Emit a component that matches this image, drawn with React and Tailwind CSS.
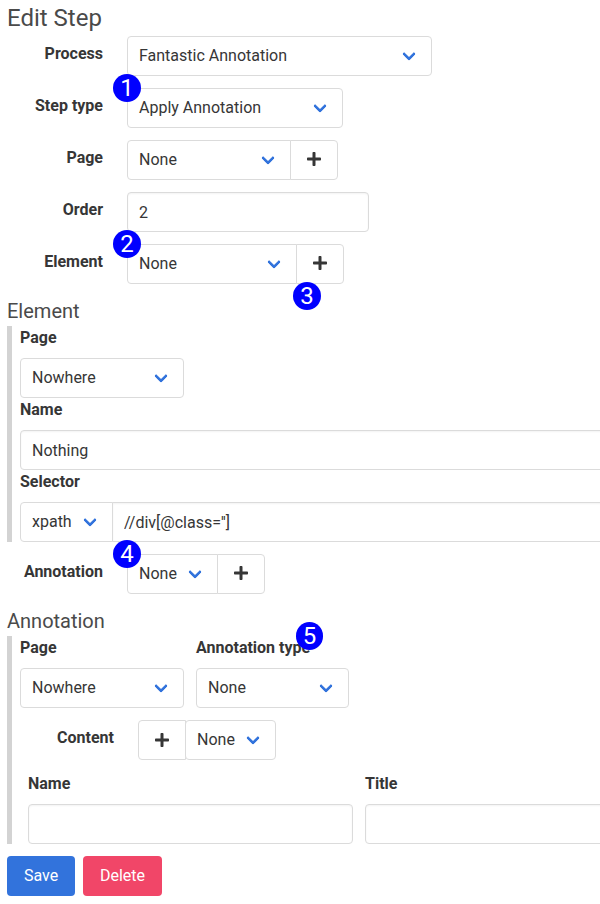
import React from 'react';

function Badge({ children, className }) {
  return (
    <span
      className={`absolute z-10 flex h-7 w-7 items-center justify-center rounded-full bg-[#0000ff] text-2xl leading-7 text-white ${className}`}
    >
      {children}
    </span>
  );
}

function Select({ value, className }) {
  return (
    <button
      type="button"
      className={`flex h-10 shrink-0 items-start justify-between rounded border border-[#dbdbdb] bg-white pl-[11px] pr-[17px] pt-[7px] leading-6 ${className}`}
    >
      <span>{value}</span>
      <span className="mt-[5px] h-2.5 w-2.5 -rotate-45 rounded-[2px] border-b-[3px] border-l-[3px] border-[#3273dc]" />
    </button>
  );
}

function PlusButton({ className }) {
  return (
    <button
      type="button"
      aria-label="Add"
      className={`flex h-10 w-12 shrink-0 items-start justify-center border border-[#dbdbdb] bg-white ${className}`}
    >
      <svg viewBox="0 0 448 512" className="h-4 w-3.5 fill-current">
        <path d="M416 208H272V64c0-17.67-14.33-32-32-32h-32c-17.67 0-32 14.33-32 32v144H32c-17.67 0-32 14.33-32 32v32c0 17.67 14.33 32 32 32h144v144c0 17.67 14.33 32 32 32h32c17.67 0 32-14.33 32-32V304h144c17.67 0 32-14.33 32-32v-32c0-17.67-14.33-32-32-32z" />
      </svg>
    </button>
  );
}

function TextInput({ value = '', label, className }) {
  return (
    <input
      aria-label={label}
      defaultValue={value}
      className={`h-10 shrink-0 rounded border border-[#dbdbdb] bg-white px-[11px] pb-[7px] pt-[8px] leading-6 shadow-[inset_0_1px_2px_rgba(10,10,10,0.05)] outline-none ${className}`}
    />
  );
}

function Row({ label, children }) {
  return (
    <div className="flex h-10 gap-6">
      <div className="w-24 shrink-0 pt-1.5 text-right font-bold leading-6">{label}</div>
      <div className="relative flex">{children}</div>
    </div>
  );
}

function Field({ label, children, badge }) {
  return (
    <div className="flex shrink-0 flex-col gap-2">
      <div className="relative font-bold leading-6">
        {label}
        {badge}
      </div>
      <div className="flex">{children}</div>
    </div>
  );
}

function Heading({ children }) {
  return <h2 className="mt-3 text-xl leading-[30px] text-[#4a4a4a]">{children}</h2>;
}

export default function App() {
  return (
    <main className="h-[904px] w-[600px] overflow-hidden bg-white pl-[7px] font-[Roboto,sans-serif] text-base text-[#363636]">
      <h1 className="text-2xl leading-9 text-[#4a4a4a]">Edit Step</h1>

      <div className="flex flex-col gap-3">
        <Row label="Process">
          <Select value="Fantastic Annotation" className="w-[305px]" />
        </Row>
        <Row label="Step type">
          <Badge className="-left-3.5 -top-3.5">1</Badge>
          <Select value="Apply Annotation" className="w-[216px]" />
        </Row>
        <Row label="Page">
          <Select value="None" className="w-[164px] rounded-r-none" />
          <PlusButton className="-ml-px rounded-r pt-2.5" />
        </Row>
        <Row label="Order">
          <TextInput label="Order" value="2" className="w-[242px]" />
        </Row>
        <Row label="Element">
          <Badge className="-left-3.5 -top-3.5">2</Badge>
          <Select value="None" className="w-[170px] rounded-r-none" />
          <PlusButton className="-ml-px rounded-r pt-2.5" />
          <Badge className="-bottom-[26px] right-[23px]">3</Badge>
        </Row>
      </div>

      <Heading>Element</Heading>
      <section className="mb-3 border-l-[5px] border-[#d3d3d3] pl-2">
        <Field label="Page">
          <Select value="Nowhere" className="w-[164px]" />
        </Field>
        <Field label="Name">
          <TextInput label="Name" value="Nothing" className="w-[600px]" />
        </Field>
        <Field label="Selector">
          <Select value="xpath" className="w-[93px] rounded-r-none" />
          <TextInput label="Selector" value="//div[@class='']" className="-ml-px w-[508px] rounded-l-none" />
        </Field>
      </section>

      <Row label="Annotation">
        <Badge className="-left-3.5 -top-3.5">4</Badge>
        <Select value="None" className="w-[91px] rounded-r-none" />
        <PlusButton className="-ml-px rounded-r pt-2.5" />
      </Row>

      <Heading>Annotation</Heading>
      <section className="mb-3 flex flex-col gap-3 border-l-[5px] border-[#d3d3d3] pl-2">
        <div className="flex gap-3">
          <Field label="Page">
            <Select value="Nowhere" className="w-[164px]" />
          </Field>
          <Field
            label="Annotation type"
            badge={<Badge className="-top-3.5 left-[100px] w-[27px] font-normal">5</Badge>}
          >
            <Select value="None" className="w-[153px]" />
          </Field>
        </div>
        <div className="flex h-10 gap-6">
          <div className="w-[94px] shrink-0 pt-1.5 text-right font-bold leading-6">Content</div>
          <div className="flex">
            <PlusButton className="rounded-l pt-[11px]" />
            <Select value="None" className="-ml-px w-[91px]" />
          </div>
        </div>
        <div className="flex gap-3 pl-2">
          <Field label="Name">
            <TextInput label="Annotation name" className="w-[325px]" />
          </Field>
          <Field label="Title">
            <TextInput label="Title" className="w-[325px]" />
          </Field>
        </div>
      </section>

      <div className="flex gap-2 text-white">
        <button type="button" className="h-10 w-[68px] rounded bg-[#3273dc] pb-px leading-6">
          Save
        </button>
        <button type="button" className="h-10 w-[79px] rounded bg-[#f14668] pb-px leading-6">
          Delete
        </button>
      </div>
    </main>
  );
}
